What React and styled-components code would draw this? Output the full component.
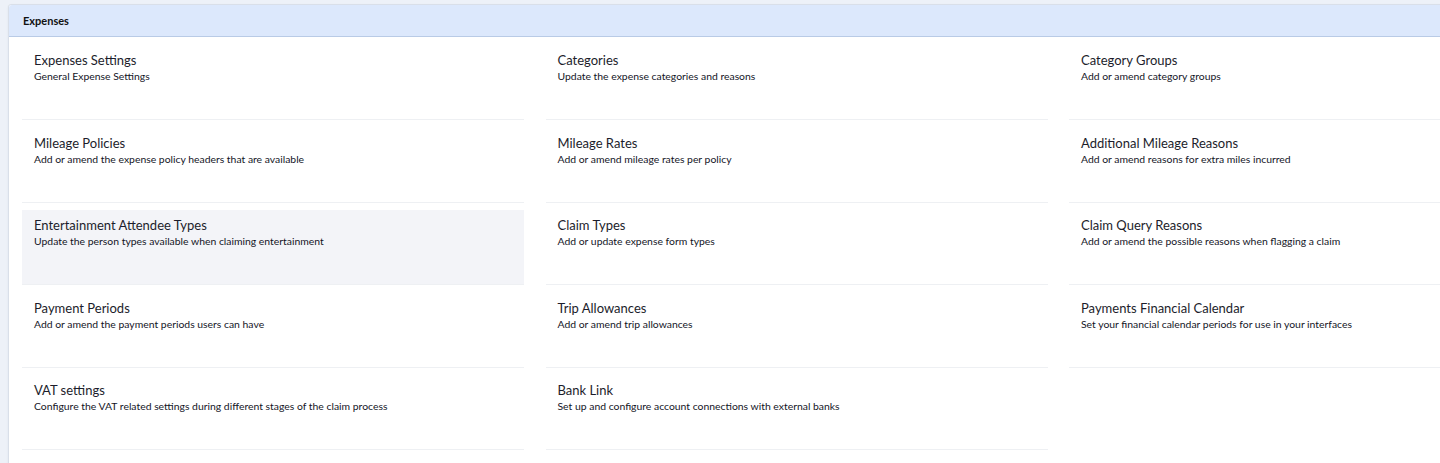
import React from 'react';
import styled, { createGlobalStyle } from 'styled-components';

const GlobalStyle = createGlobalStyle`
  html, body {
    margin: 0;
    padding: 0;
    background: #edf1f8;
    overflow: hidden;
  }
  body {
    font-family: Lato, "Open Sans", sans-serif;
    color: #1c1d2b;
  }
`;

const Page = styled.div`
  padding: 4px 0 0 8px;
`;

const Card = styled.section`
  width: 1600px;
  background: #ffffff;
  border: 1px solid #d9dfe9;
  border-radius: 3px;
  box-shadow: 0 1px 2px rgba(40, 60, 100, 0.08);
  min-height: 470px;
`;

const Header = styled.header`
  height: 31px;
  display: flex;
  align-items: center;
  padding-left: 14px;
  background: #dce8fc;
  border-bottom: 1px solid #b9cbe6;
  border-radius: 3px 3px 0 0;
  font-size: 11px;
  font-weight: 700;
  color: #111;
`;

const Grid = styled.div`
  display: grid;
  grid-template-columns: repeat(3, 502px);
  column-gap: 21.5px;
  row-gap: 7.5px;
  padding: 8px 0 0 13px;
`;

const Item = styled.a`
  display: block;
  box-sizing: border-box;
  height: 75px;
  padding: 7px 12px;
  border-bottom: 1px solid #eef0f3;
  background: ${p => (p.active ? '#f3f4f8' : 'transparent')};
  text-decoration: none;
  color: inherit;
  cursor: pointer;
`;

const Title = styled.div`
  font-size: 13px;
  line-height: 16px;
  color: #1c1d2b;
`;

const Desc = styled.div`
  margin-top: 1px;
  font-size: 10.4px;
  line-height: 15px;
  color: #14151f;
`;

const items = [
  { title: 'Expenses Settings', desc: 'General Expense Settings' },
  { title: 'Categories', desc: 'Update the expense categories and reasons' },
  { title: 'Category Groups', desc: 'Add or amend category groups' },
  { title: 'Mileage Policies', desc: 'Add or amend the expense policy headers that are available' },
  { title: 'Mileage Rates', desc: 'Add or amend mileage rates per policy' },
  { title: 'Additional Mileage Reasons', desc: 'Add or amend reasons for extra miles incurred' },
  { title: 'Entertainment Attendee Types', desc: 'Update the person types available when claiming entertainment', active: true },
  { title: 'Claim Types', desc: 'Add or update expense form types' },
  { title: 'Claim Query Reasons', desc: 'Add or amend the possible reasons when flagging a claim' },
  { title: 'Payment Periods', desc: 'Add or amend the payment periods users can have' },
  { title: 'Trip Allowances', desc: 'Add or amend trip allowances' },
  { title: 'Payments Financial Calendar', desc: 'Set your financial calendar periods for use in your interfaces' },
  { title: 'VAT settings', desc: 'Configure the VAT related settings during different stages of the claim process' },
  { title: 'Bank Link', desc: 'Set up and configure account connections with external banks' },
];

export default function App() {
  return (
    <>
      <GlobalStyle />
      <Page>
        <Card>
          <Header>Expenses</Header>
          <Grid>
            {items.map(item => (
              <Item key={item.title} active={item.active}>
                <Title>{item.title}</Title>
                <Desc>{item.desc}</Desc>
              </Item>
            ))}
          </Grid>
        </Card>
      </Page>
    </>
  );
}
